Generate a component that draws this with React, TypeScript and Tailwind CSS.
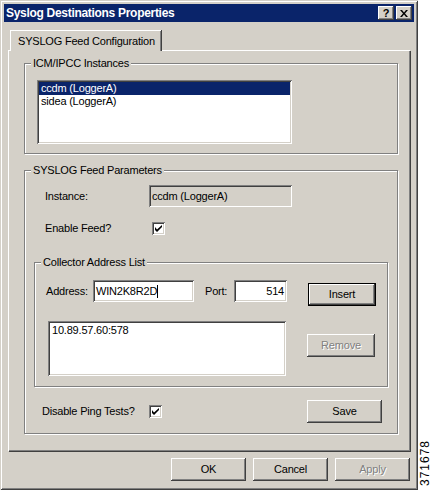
const raised =
  "shadow-[inset_-1px_-1px_0_#404040,inset_1px_1px_0_#fff,inset_-2px_-2px_0_#808080,inset_2px_2px_0_#d4d0c8]";
const sunken =
  "shadow-[inset_1px_1px_0_#808080,inset_-1px_-1px_0_#fff,inset_2px_2px_0_#404040,inset_-2px_-2px_0_#d4d0c8]";
const etched = "border border-[#808080] shadow-[inset_1px_1px_0_#fff,1px_1px_0_#fff]";

const Check = () => (
  <div className={`w-[13px] h-[13px] bg-white flex items-center justify-center ${sunken}`}>
    <svg width="7" height="7" viewBox="0 0 7 7">
      <path d="M0 2v3l2 2l5-5V-0L2 4.5z" fill="#000" />
    </svg>
  </div>
);

const Button = ({
  label,
  w = "w-[75px]",
  h = "h-[23px]",
  disabled = false,
  isDefault = false,
  extra = "",
}: {
  label: string;
  w?: string;
  h?: string;
  disabled?: boolean;
  isDefault?: boolean;
  extra?: string;
}) => (
  <div
    className={`${w} ${h} bg-[#d4d0c8] flex items-center justify-center ${
      isDefault ? "border border-black" : ""
    } ${raised} ${extra}`}
  >
    <span className={disabled ? "text-[#808080] [text-shadow:1px_1px_0_#fff]" : ""}>{label}</span>
  </div>
);

const Group = ({
  title,
  className,
  children,
}: {
  title: string;
  className: string;
  children?: React.ReactNode;
}) => (
  <div className={`relative ${etched} ${className}`}>
    <span className="absolute -top-[7px] left-[6px] bg-[#d4d0c8] px-[2px] leading-[13px]">{title}</span>
    {children}
  </div>
);

export default function App() {
  return (
    <div className="w-[432px] h-[490px] flex bg-white text-[11px] leading-[13px] tracking-[-0.2px] text-black font-['Liberation_Sans',Arial,sans-serif] overflow-hidden">
      {/* Window */}
      <div className="w-[418px] h-[490px] shrink-0 bg-[#d4d0c8] p-[4px] flex flex-col shadow-[inset_1px_1px_0_#d4d0c8,inset_-1px_-1px_0_#404040,inset_2px_2px_0_#fff,inset_-2px_-2px_0_#808080]">
        {/* Title bar */}
        <div className="h-[18px] bg-[#0a246a] flex items-center pl-[2px] pr-[2px]">
          <span className="text-white font-bold text-[12px] tracking-[-0.3px]">Syslog Destinations Properties</span>
          <div className="ml-auto flex gap-[2px]">
            <div className={`w-[16px] h-[14px] bg-[#d4d0c8] flex items-center justify-center font-bold text-[11px] ${raised}`}>
              ?
            </div>
            <div className={`w-[16px] h-[14px] bg-[#d4d0c8] flex items-center justify-center ${raised}`}>
              <svg width="8" height="7" viewBox="0 0 8 7">
                <path d="M0 0h2l2 2.5L6 0h2L5 3.5L8 7H6L4 4.5L2 7H0l3-3.5z" fill="#000" />
              </svg>
            </div>
          </div>
        </div>

        {/* Tabs */}
        <div className="mt-[8px] pl-[6px] flex relative z-10 -mb-px">
          <div className="w-[151px] h-[21px] bg-[#d4d0c8] border-l border-t border-white shadow-[inset_-1px_0_0_#808080,1px_0_0_#404040] flex items-center pl-[7px]">
            SYSLOG Feed Configuration
          </div>
        </div>

        {/* Tab panel */}
        <div className="mx-[4px] h-[401px] border-l border-t border-white shadow-[inset_-1px_-1px_0_#808080,1px_1px_0_#404040] pl-[15px] pt-[12px] flex flex-col">
          <Group title="ICM/IPCC Instances" className="w-[374px] h-[91px] pl-[12px] pt-[16px]">
            <div className={`w-[255px] h-[64px] bg-white p-[2px] ${sunken}`}>
              <div className="h-[13px] bg-[#0a246a] text-white pl-[2px]">ccdm (LoggerA)</div>
              <div className="h-[13px] pl-[2px]">sidea (LoggerA)</div>
            </div>
          </Group>

          <Group title="SYSLOG Feed Parameters" className="mt-[16px] w-[374px] h-[264px] pl-[9px] flex flex-col">
            <div className="mt-[14px] flex items-center h-[22px] pl-[11px]">
              <span className="w-[104px]">Instance:</span>
              <div className={`w-[143px] h-[22px] bg-[#d4d0c8] flex items-center pl-[3px] ${sunken}`}>
                ccdm (LoggerA)
              </div>
            </div>
            <div className="mt-[15px] flex items-center h-[13px] pl-[11px]">
              <span className="w-[107px]">Enable Feed?</span>
              <Check />
            </div>

            <Group title="Collector Address List" className="mt-[27px] w-[354px] h-[125px] pl-[11px] pt-[17px] flex flex-col">
              <div className="flex items-start">
                <span className="w-[47px] h-[22px] flex items-center">Address:</span>
                <div className={`w-[101px] h-[22px] bg-white flex items-center pl-[3px] ${sunken}`}>
                  WIN2K8R2D<span className="w-px h-[13px] bg-black" />
                </div>
                <span className="ml-[11px] w-[29px] h-[22px] flex items-center">Port:</span>
                <div className={`w-[53px] h-[22px] bg-white flex items-center justify-end pr-[3px] ${sunken}`}>
                  514
                </div>
                <Button label="Insert" w="w-[68px]" isDefault extra="ml-[21px] mt-[3px]" />
              </div>
              <div className="mt-[15px] flex items-start">
                <div className={`ml-[2px] w-[238px] h-[55px] bg-white pl-[4px] pt-[3px] ${sunken}`}>10.89.57.60:578</div>
                <Button label="Remove" w="w-[68px]" disabled extra="ml-[21px] mt-[13px]" />
              </div>
            </Group>

            <div className="mt-[13px] flex items-center h-[23px] pl-[8px]">
              <span className="w-[107px]">Disable Ping Tests?</span>
              <Check />
              <Button label="Save" extra="ml-[145px]" />
            </div>
          </Group>
        </div>

        {/* Dialog buttons */}
        <div className="mt-[7px] flex justify-end gap-[7px] pr-[4px]">
          <Button label="OK" />
          <Button label="Cancel" />
          <Button label="Apply" disabled />
        </div>
      </div>

      {/* Figure number */}
      <div className="flex-1 flex items-end justify-center pb-[4px]">
        <span className="[writing-mode:vertical-rl] rotate-180 text-[12px] leading-[12px] tracking-[1px]">371678</span>
      </div>
    </div>
  );
}
